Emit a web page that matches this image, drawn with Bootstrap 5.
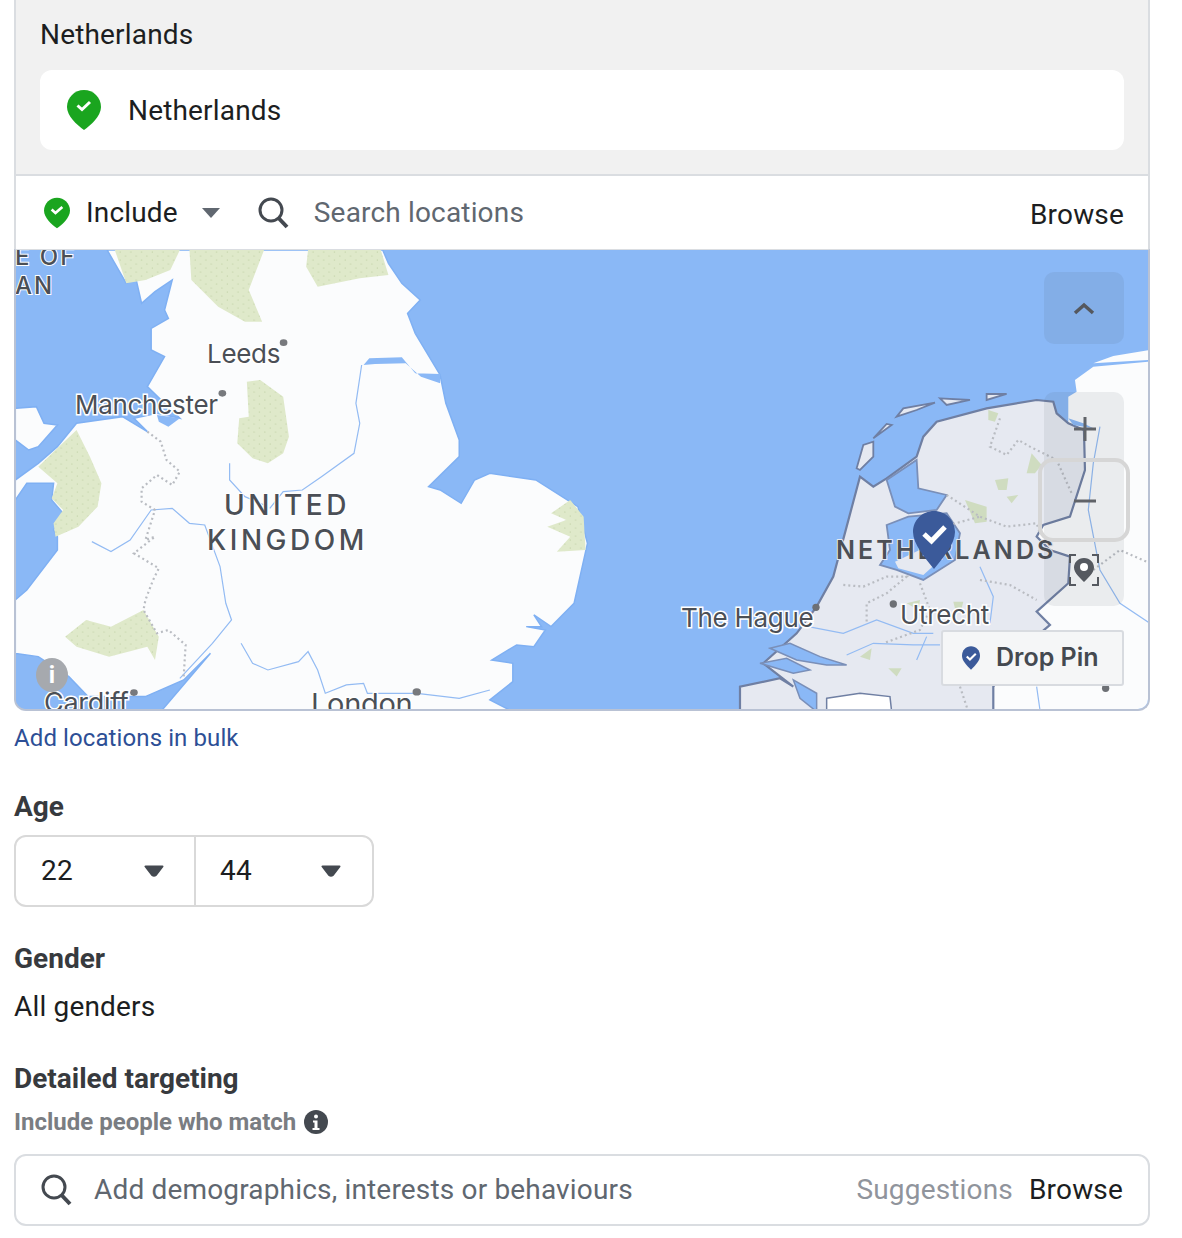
<!DOCTYPE html>
<html lang="en">
<head>
<meta charset="utf-8">
<title>Audience</title>
<link href="https://cdn.jsdelivr.net/npm/bootstrap@5.3.0/dist/css/bootstrap.min.css" rel="stylesheet">
<style>
body{background:#fff;font-family:Roboto,"Liberation Sans",sans-serif;color:#1c1e21;overflow:hidden}
.ta-page{width:1150px;padding-left:14px;height:1238px}
.ta-box{border-left:2px solid #dadde1;border-right:2px solid #dadde1}
.ta-selected{background:#f1f1f1;height:176px;padding:17px 24px 0 24px;border-bottom:2px solid #dadde1}
.ta-t28{font-size:28px;line-height:36px;letter-spacing:.17px}
.ta-loc{background:#fff;border-radius:12px;height:80px;margin-top:17px;padding-left:27px;gap:27px}
.ta-locname{padding-top:2px}
.ta-bar{height:73px;padding:0 24px 0 28px;background:#fff}
.ta-grey{color:#606770}
.ta-inc{margin-left:16px;margin-right:24px}
.ta-sq{margin-left:38px;margin-right:25px}
.ta-brw{margin-top:4px}
.ta-map{position:relative;height:462px;border:2px solid #b9c2d4;border-top:1px solid #dadde1;border-radius:0 0 12px 12px;overflow:hidden;background:#8ab8f6}
.ta-map svg.ta-mapsvg{display:block;width:1132px;height:461px}
.ta-lbl{font-family:Inter,Roboto,sans-serif;font-size:26px;fill:#4b4f56;stroke:#fff;stroke-width:3px;paint-order:stroke;letter-spacing:-.3px}
.ta-lblb{font-size:29px}
.ta-lblc{font-size:27px}
.ta-cnt{font-family:Inter,Roboto,sans-serif;font-size:28px;font-weight:500;fill:#4b4f56;stroke:#fff;stroke-width:2px;paint-order:stroke;letter-spacing:3.5px}
.ta-cntnl{font-size:25px;font-weight:600;letter-spacing:3.1px;stroke:#e6e9f1}
.ta-cntsm{font-size:24px;letter-spacing:2px}
.ta-line{fill:none;stroke:#93bbf3;stroke-width:1.2;vector-effect:non-scaling-stroke}
.ta-dots{fill:none;stroke:#b9bcc2;stroke-width:2.2;stroke-dasharray:2 3;vector-effect:non-scaling-stroke}
.ta-ctl{position:absolute;left:1028px;width:80px;background:rgba(70,80,90,.09);border-radius:10px}
.ta-ctlup{top:22px;height:72px}
.ta-ctlzoom{top:142px;height:214px}
.ta-ring{position:absolute;left:1022px;top:208px;width:92px;height:84px;border:4px solid #d6d6d6;border-radius:15px}
.ta-mk{position:absolute}
.ta-mk-pin{left:896px;top:260px}
.ta-mk-zoom{left:1057px;top:167px}
.ta-mk-loc{left:1052px;top:304px}
.ta-drop{position:absolute;left:925px;top:380px;width:183px;height:56px;background:#f5f6f7;border:2px solid #d8dbe0;border-radius:3px;gap:16px;padding-left:19px;font-family:Inter,Roboto,sans-serif;font-weight:600;font-size:25px;color:#444950}
.ta-info{position:absolute;left:20px;top:408px;width:32px;height:34px;border-radius:50%;background:#a6a9ae;color:#fff;font-weight:700;font-size:24px;line-height:34px;text-align:center}
.ta-link{color:#2d4f96;font-size:24px;line-height:32px;margin-top:11px;text-decoration:none;display:block;letter-spacing:.1px}
.ta-h{font-weight:700;font-size:28px;line-height:34px;color:#373a3e}
.ta-age{width:360px;height:72px;border:2px solid #d9d9d9;border-radius:12px;margin-top:11px}
.ta-agec{height:100%;padding:0 30px 0 25px}
.ta-agec+.ta-agec{border-left:2px solid #d9d9d9;padding:0 31px 0 24px}
.ta-w179{width:179px}
.ta-sub{font-weight:700;font-size:24px;line-height:32px;color:#7a7d82;gap:8px}
.ta-sb{height:72px;border:2px solid #dadde1;border-radius:12px;padding:0 25px 0 25px;margin-top:16px}
.ta-mut{color:#90949c}
.ta-hold{color:#606770;margin-left:22px}
.ta-agelabel{margin-top:36px}
.ta-glabel{margin-top:35px}
.ta-gval{margin-top:13px}
.ta-dlabel{margin-top:37px}
.ta-sublabel{margin-top:10px}
</style>
</head>
<body>
<div class="ta-page">
  <div class="ta-box ta-selected">
    <div class="ta-t28">Netherlands</div>
    <div class="ta-loc d-flex align-items-center ta-t28">
      <svg width="34" height="40" viewBox="0 0 34 40"><path d="M17 0C7.600 0 0 7.500 0 17c0 9 10 18 17 23 7-5 17-14 17-23C34 7.500 26.400 0 17 0z" fill="#1aa51f"/><path d="M10.500 15.500l4.500 4 8-7.500" fill="none" stroke="#fff" stroke-width="3"/></svg>
      <span class="ta-locname">Netherlands</span>
    </div>
  </div>
  <div class="ta-box ta-bar d-flex align-items-center ta-t28">
    <svg width="26" height="32" viewBox="0 0 34 40"><path d="M17 0C7.600 0 0 7.500 0 17c0 9 10 18 17 23 7-5 17-14 17-23C34 7.500 26.400 0 17 0z" fill="#1aa51f"/><path d="M10 15.500l5 4.500 9-8" fill="none" stroke="#fff" stroke-width="3.500"/></svg>
    <span class="ta-inc">Include</span>
    <svg width="18" height="10" viewBox="0 0 18 10"><path d="M0 0h18l-9 10z" fill="#606770"/></svg>
    <svg class="ta-sq" width="31" height="32" viewBox="0 0 31 32"><circle cx="13" cy="13" r="11" fill="none" stroke="#444950" stroke-width="3"/><path d="M20.500 21l8.500 9" stroke="#444950" stroke-width="4"/></svg>
    <span class="ta-grey flex-grow-1">Search locations</span>
    <span class="ta-brw">Browse</span>
  </div>
  <div class="ta-map">
    <svg class="ta-mapsvg" viewBox="16 250 1132 461" aria-hidden="true">
      <defs>
        <pattern id="ta-speck" width="28" height="24" patternUnits="userSpaceOnUse"><rect width="28" height="24" fill="#dfe9ca"/><circle cx="6" cy="6" r="1.600" fill="#b9cb9d"/><circle cx="20" cy="18" r="1.600" fill="#b9cb9d"/></pattern>
      </defs>
      <rect x="15" y="250" width="1134" height="461" fill="#8ab8f6"/>
      <g transform="translate(0 250) scale(.3827 .3333)">
        <path fill="#fbfcfd" stroke="#7fb0f3" stroke-width="1.500" vector-effect="non-scaling-stroke" d="M280 0L1000 0L1015 40L1050 100L1098 150L1065 190L1085 250L1150 375L1165 460L1200 570L1200 620L1120 710L1150 720L1205 760L1240 690L1280 670L1400 690L1510 770L1535 880L1500 1060L1440 1130L1395 1095L1415 1130L1375 1130L1425 1140L1395 1190L1350 1185L1285 1230L1340 1240L1340 1295L1280 1350L1340 1385L420 1385L550 1210L480 1290L380 1340L230 1340L180 1280L100 1220L40 1210L40 1050L70 1020L150 900L150 860L140 840L165 790L135 750L140 700L70 700L40 750L40 690L100 640L150 590L200 520L320 500L385 545L350 505L410 490L470 505L385 410L430 320L395 300L395 235L440 205L430 180L450 90L405 125L370 160L355 85L330 100Z"/>
        <path fill="#fbfcfd" stroke="#7fb0f3" stroke-width="1.500" vector-effect="non-scaling-stroke" d="M40 475L95 470L115 520L150 525L100 590L75 600L40 570Z"/>
        <path fill="#8ab8f6" d="M950 345L965 325L1050 322L1085 370L1150 372L1150 400L1100 380L1060 340L980 342L950 345Z"/>
        <path fill="#8ab8f6" d="M410 495L470 505L440 530L415 515Z"/>
        <g fill="url(#ta-speck)">
          <path d="M300 0H470L445 60L380 90L330 100Z"/>
          <path d="M495 0H690L650 120L685 215L640 215L570 170L500 90Z"/>
          <path d="M805 0H995L1015 75L940 85L830 110L800 50Z"/>
          <path d="M645 395L680 390L740 440L755 560L740 610L700 640L660 625L620 580L625 505L650 500Z"/>
          <path d="M200 540L235 620L265 700L255 770L205 830L145 860L140 820L165 780L135 745L150 700L100 650L145 600Z"/>
          <path d="M170 1160L225 1110L290 1130L375 1080L415 1160L405 1230L385 1190L285 1220L200 1190Z"/>
          <path d="M1490 750L1525 800L1530 900L1455 905L1490 860L1430 830L1480 810L1440 790Z"/>
        </g>
        <path class="ta-line" d="M945 345L930 460L940 520L925 610L840 680L790 720L740 725L705 775M600 640L600 690L640 740L700 770M240 875L290 905L340 870L395 780L450 775L495 820L535 825L575 950L590 1060L605 1110L555 1180L470 1285M630 1180L660 1240L700 1260L780 1235L805 1205L830 1260L850 1330L905 1305L950 1300L960 1330L1090 1330L1200 1345L1280 1320"/>
        <path class="ta-dots" d="M385 545L420 575L435 630L470 665L450 705L410 675L370 715L370 755L405 780L380 870L405 860L350 910L415 955L400 990L380 1050L375 1080L410 1150L440 1140L485 1185L480 1280"/>
        <circle cx="741" cy="278" r="10" fill="#77797d"/>
        <circle cx="581" cy="430" r="10" fill="#77797d"/>
        <circle cx="350" cy="1328" r="10" fill="#77797d"/>
        <circle cx="1089" cy="1326" r="11" fill="#77797d"/>
      </g>
      <g transform="translate(660 250) scale(.3333)">
        <path fill="#fbfcfd" d="M1470 335L1300 350L1245 390L1250 425L1225 440L1225 520L1000 1000L1000 1385H1470Z"/>
        <path fill="#fbfcfd" d="M1470 300L1360 318L1300 340L1470 330Z"/>
        <path fill="#e6e9f1" stroke="#6f7fa3" stroke-width="2.200" vector-effect="non-scaling-stroke" d="M600 680L640 710L680 685L770 620L790 560L830 515L980 475L1130 450L1180 455L1190 490L1225 520L1272 540L1275 660L1230 800L1150 825L1130 860L1170 900L1230 920L1225 1000L1130 1085L1170 1125L1150 1142L1000 1310L1000 1385L240 1385L240 1310L360 1285L400 1310L310 1240L410 1150L470 1070L520 980L560 830Z"/>
        <path fill="#8ab8f6" stroke="#7a8fb8" stroke-width="1.800" vector-effect="non-scaling-stroke" d="M680 690L770 630L775 715L860 735L830 780L745 790L705 770Z"/>
        <path fill="#8ab8f6" stroke="#7a8fb8" stroke-width="1.800" vector-effect="non-scaling-stroke" d="M680 825L745 800L860 790L900 850L885 930L790 990L710 960L660 945L690 900Z"/>
        <path fill="#e6e9f1" d="M705 935L790 895L840 930L790 975L715 955Z"/>
        <path fill="#e6e9f1" stroke="#6f7fa3" stroke-width="1.800" vector-effect="non-scaling-stroke" d="M590 655L610 585L640 575L640 620L600 660ZM710 500L730 475L825 458L770 480ZM840 445L930 450L860 465ZM980 432L1040 432L980 450ZM640 565L680 522L695 525Z"/>
        <path fill="#8ab8f6" d="M1225 505L1270 520L1300 535L1240 525Z"/>
        <path fill="#8ab8f6" stroke="#7a8fb8" stroke-width="1.500" vector-effect="non-scaling-stroke" d="M330 1195L410 1230L500 1245L560 1245L480 1220L390 1180ZM300 1240L400 1270L450 1260L380 1225ZM400 1290L470 1330L470 1385L420 1345Z"/>
        <path fill="#fff" stroke="#6f7fa3" stroke-width="1.500" vector-effect="non-scaling-stroke" d="M500 1345L600 1330L690 1340L695 1385H500Z"/>
        <g fill="#cfdcc0">
          <path d="M1100 670L1115 610L1145 645L1125 670Z"/><path d="M1005 690L1045 685L1040 720L1015 720Z"/>
          <path d="M915 750L980 770L980 815L945 820Z"/><path d="M1040 740L1075 735L1055 760Z"/>
          <path d="M985 480L1015 490L1005 515L985 510Z"/><path d="M740 1060L780 1050L775 1080Z"/>
          <path d="M880 1055L910 1055L905 1075L885 1075Z"/><path d="M600 1220L635 1195L630 1230Z"/><path d="M685 1255L725 1255L710 1280Z"/>
        </g>
        <path class="ta-line" d="M445 1130L550 1150L650 1110L760 1150L820 1150M560 1215L640 1180L760 1185L840 1185M770 1230L800 1160M960 950L1000 1040L990 1120M1320 530L1300 640L1285 780L1320 960L1380 1060L1470 1120M1130 1310L1140 1380"/>
        <path class="ta-dots" d="M1020 505L990 590L1040 615L1075 570L1110 590L1190 630L1235 730M860 735L960 800L1040 830L1130 820L1140 850M550 1005L610 1010L680 980L740 980L680 1030L620 1060L620 1120M780 1000L810 1080L780 1140L670 1180M960 990L1050 1005L1130 1050M850 830L960 800M900 1310L925 1385M1300 960L1380 900L1470 940"/>
        <circle cx="468" cy="1072" r="11" fill="#6d7075"/>
        <circle cx="700" cy="1062" r="11" fill="#6d7075"/>
        <circle cx="1337" cy="1315" r="11" fill="#6d7075"/>
      </g>
      <text class="ta-cnt ta-cntsm" x="15" y="265">E OF</text>
      <text class="ta-cnt ta-cntsm" x="15" y="294">AN</text>
      <text class="ta-lbl" x="207" y="363">Leeds</text>
      <text class="ta-lbl" x="75" y="414">Manchester</text>
      <text class="ta-cnt" x="224" y="515">UNITED</text>
      <text class="ta-cnt" x="207" y="550">KINGDOM</text>
      <text class="ta-lbl ta-lblc" x="44" y="712">Cardiff</text>
      <text class="ta-lbl ta-lblb" x="311" y="714">London</text>
      <text class="ta-cnt ta-cntnl" x="836" y="559">NETHERLANDS</text>
      <text class="ta-lbl" x="681" y="627">The Hague</text>
      <text class="ta-lbl" x="900" y="624">Utrecht</text>
    </svg>
    <svg class="ta-mk ta-mk-pin" width="44" height="60" viewBox="0 0 44 60"><path d="M22 1C10 1 1 10.500 1 22c0 12 12 26 21 37 9-11 21-25 21-37C43 10.500 34 1 22 1z" fill="#3b5a9a"/><path d="M12 24l7.500 7L33 17" fill="none" stroke="#fff" stroke-width="5"/></svg>
    <div class="ta-ctl ta-ctlup d-flex align-items-center justify-content-center">
      <svg width="22" height="13" viewBox="0 0 22 13"><path d="M2 11l9-8 9 8" fill="none" stroke="#55585e" stroke-width="3.500"/></svg>
    </div>
    <div class="ta-ctl ta-ctlzoom"></div>
    <div class="ta-ring"></div>
    <svg class="ta-mk ta-mk-zoom" width="24" height="86" viewBox="0 0 24 86"><path d="M1 12h22M12 0v24M1 84h22" stroke="#606368" stroke-width="3"/></svg>
    <svg class="ta-mk ta-mk-loc" width="32" height="32" viewBox="0 0 32 32"><path d="M8 1H2v8M24 1h6v8M8 31H2v-8M24 31h6v-8" fill="none" stroke="#555960" stroke-width="2"/><path d="M16 4C10 4 6 8.500 6 13.500 6 19 12 24 16 28c4-4 10-9 10-14.500C26 8.500 22 4 16 4z" fill="#555960"/><circle cx="16" cy="13" r="4" fill="#fff"/></svg>
    <div class="ta-info">i</div>
    <div class="ta-drop d-flex align-items-center">
      <svg width="18" height="24" viewBox="0 0 34 44"><path d="M17 0C7.600 0 0 7.500 0 18c0 9 10 19 17 26 7-7 17-17 17-26C34 7.500 26.400 0 17 0z" fill="#3b5a9a"/><path d="M9 19l6 6 11-11" fill="none" stroke="#fff" stroke-width="4"/></svg>
      <span>Drop Pin</span>
    </div>
  </div>
  <a class="ta-link" href="#">Add locations in bulk</a>
  <div class="ta-h ta-agelabel">Age</div>
  <div class="ta-age d-flex ta-t28">
    <div class="ta-agec ta-w179 d-flex align-items-center justify-content-between"><span>22</span><svg width="20" height="12" viewBox="0 0 20 12"><path d="M1.500 1.500h17l-6.500 8.500q-2 1.500-4 0z" fill="#444950" stroke="#444950" stroke-linejoin="round" stroke-width="2"/></svg></div>
    <div class="ta-agec ta-w179 d-flex align-items-center justify-content-between"><span>44</span><svg width="20" height="12" viewBox="0 0 20 12"><path d="M1.500 1.500h17l-6.500 8.500q-2 1.500-4 0z" fill="#444950" stroke="#444950" stroke-linejoin="round" stroke-width="2"/></svg></div>
  </div>
  <div class="ta-h ta-glabel">Gender</div>
  <div class="ta-t28 ta-gval">All genders</div>
  <div class="ta-h ta-dlabel">Detailed targeting</div>
  <div class="ta-sub d-flex align-items-center ta-sublabel">Include people who match
    <svg width="24" height="24" viewBox="0 0 24 24"><circle cx="12" cy="12" r="12" fill="#444950"/><circle cx="12" cy="6.500" r="2" fill="#fff"/><path d="M9 10.500h4.500V18H15.500v2h-7v-2h2v-5.500H9z" fill="#fff"/></svg>
  </div>
  <div class="ta-sb d-flex align-items-center ta-t28">
    <svg width="31" height="32" viewBox="0 0 31 32"><circle cx="13" cy="13" r="11" fill="none" stroke="#444950" stroke-width="3"/><path d="M20.500 21l8.500 9" stroke="#444950" stroke-width="4"/></svg>
    <span class="ta-hold flex-grow-1">Add demographics, interests or behaviours</span>
    <span class="ta-mut me-3">Suggestions</span>
    <span>Browse</span>
  </div>
</div>
</body>
</html>
